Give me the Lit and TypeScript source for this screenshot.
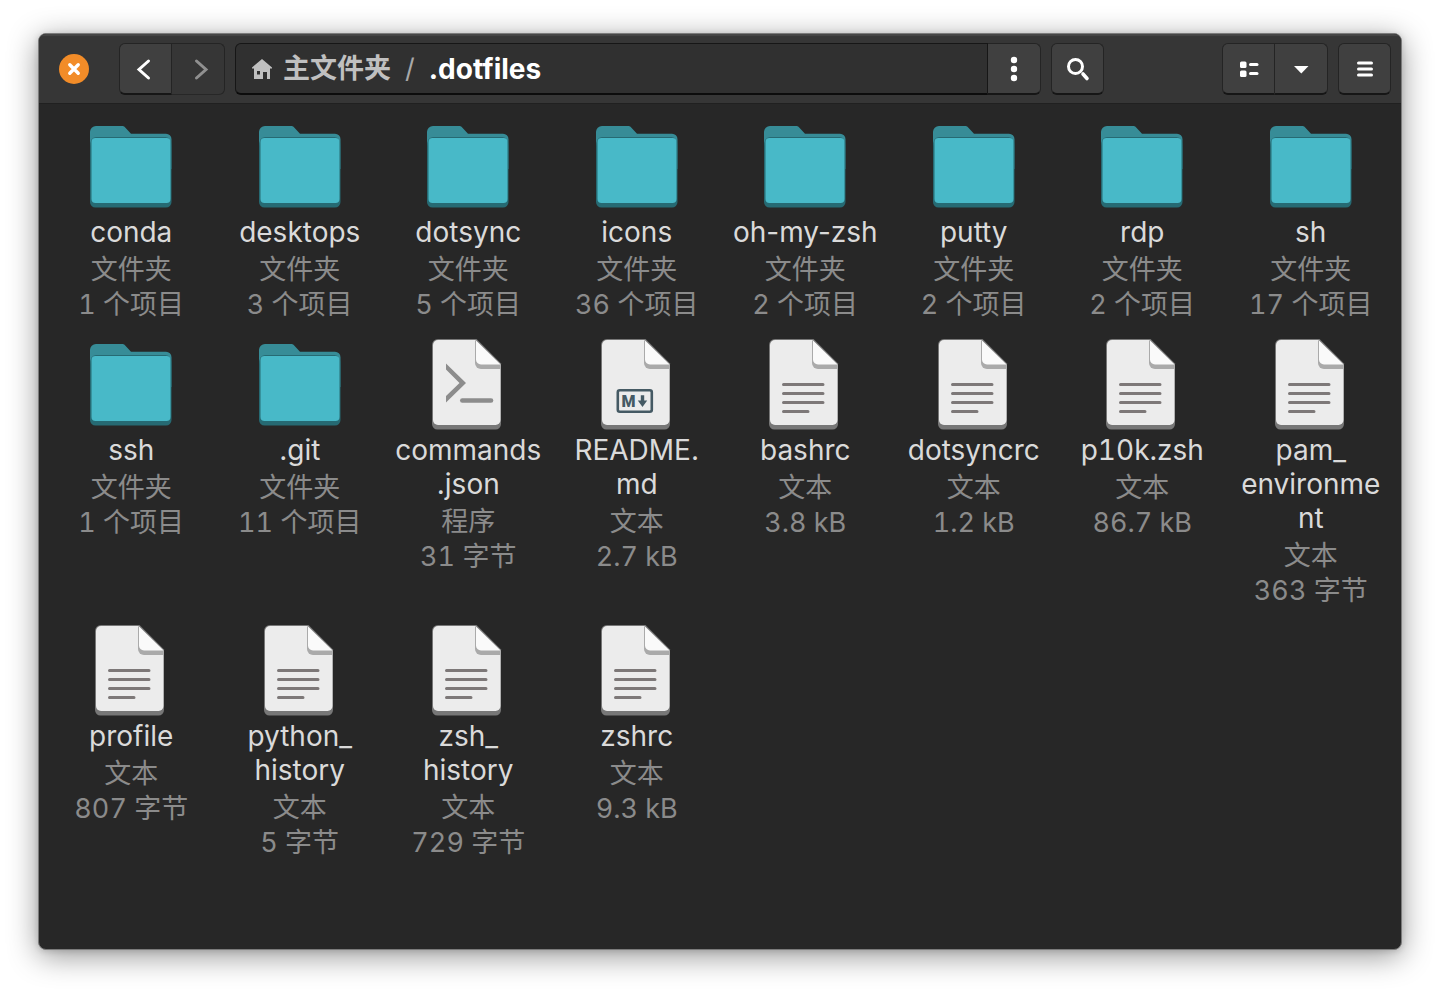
import { LitElement, html, svg, css, nothing } from "lit";
import { customElement, property } from "lit/decorators.js";
import { classMap } from "lit/directives/class-map.js";

type Kind = "folder" | "text" | "script" | "markdown";

interface Entry {
  /** Name split at the places where a line may break. */
  name: string[];
  kind: Kind;
  type: string;
  info: string;
}

const folder = (name: string, count: number): Entry => ({
  name: [name],
  kind: "folder",
  type: "文件夹",
  info: `${count} 个项目`,
});

const file = (name: string[], info: string, kind: Kind = "text", type = "文本"): Entry => ({
  name,
  kind,
  type,
  info,
});

const ENTRIES: Entry[] = [
  folder("conda", 1),
  folder("desktops", 3),
  folder("dotsync", 5),
  folder("icons", 36),
  folder("oh-my-zsh", 2),
  folder("putty", 2),
  folder("rdp", 2),
  folder("sh", 17),
  folder("ssh", 1),
  folder(".git", 11),
  file(["commands", ".json"], "31 字节", "script", "程序"),
  file(["README.", "md"], "2.7 kB", "markdown"),
  file(["bashrc"], "3.8 kB"),
  file(["dotsyncrc"], "1.2 kB"),
  file(["p10k.zsh"], "86.7 kB"),
  file(["pam_", "environment"], "363 字节"),
  file(["profile"], "807 字节"),
  file(["python_", "history"], "5 字节"),
  file(["zsh_", "history"], "729 字节"),
  file(["zshrc"], "9.3 kB"),
];

const folderArt = svg`
  <path d="M7 13a6 6 0 0 1 6-6h26.500q1.200 0 2 .8L48 14.700h35a5.500 5.500 0 0 1 5.500 5.500V50H7z" fill="#378c97"/>
  <path d="M7 28q0-10 6-10h69.500q6 0 6 10v55a5.500 5.500 0 0 1-5.500 5.500H12.500A5.500 5.500 0 0 1 7 83z" fill="#266a73"/>
  <rect x="8.500" y="19" width="79" height="65" rx="4" fill="#48b9c8"/>`;

const sheetArt = svg`
  <path d="M18 2h38.500L81 26.500V87a5.500 5.500 0 0 1-5.500 5.500h-58A5.500 5.500 0 0 1 12 87V8a6 6 0 0 1 6-6z" fill="#777"/>
  <path d="M18 3h37.500L80.500 28v55a5 5 0 0 1-5 5h-57.500a5 5 0 0 1-5-5V8a5 5 0 0 1 5-5z" fill="#ececec"/>
  <path d="M55 3v23a6 6 0 0 0 6 6h19.500v-5z" fill="#aaa"/>
  <path d="M56 3.500v19a5 5 0 0 0 5 5h19.500z" fill="#fafafa"/>`;

const sheetContent: Record<Exclude<Kind, "folder">, unknown> = {
  text: svg`<path d="M26.500 47.500H66M26.500 56.500H66M26.500 65.500H66M26.500 74.500H51" stroke="#7d7878" stroke-width="3" stroke-linecap="round"/>`,
  script: svg`
    <path d="M26 26.500v6L39.500 46 26 59v6.500L46 46z" fill="#8c8c8c"/>
    <path d="M42.300 63.500H71" stroke="#8c8c8c" stroke-width="4.600" stroke-linecap="round"/>`,
  markdown: svg`
    <rect x="28.800" y="53.200" width="34" height="21.500" rx="2" fill="none" stroke="#455a64" stroke-width="2.600"/>
    <text x="32.500" y="70" font-family="Roboto, sans-serif" font-weight="900" font-size="16" fill="#455a64">M</text>
    <path d="M51.800 58.200h3.400v5.300h3L53.500 70l-4.700-6.500h3z" fill="#455a64"/>`,
};

@customElement("file-entry")
export class FileEntry extends LitElement {
  @property({ attribute: false }) entry!: Entry;

  static styles = css`
    :host {
      display: flex;
      flex-direction: column;
      align-items: center;
      padding: 0 11px;
      text-align: center;
    }
    .art {
      display: block;
      width: 96px;
      height: 96px;
    }
    .name {
      max-width: 100%;
      color: #dadada;
      font-size: 28px;
      font-weight: 380;
      line-height: 34px;
      overflow-wrap: anywhere;
    }
    .details {
      margin: 3px 0 0;
      color: #8b8b8b;
      font-size: 27px;
      line-height: 35px;
    }
    .tabular,
    .details {
      font-variant-numeric: tabular-nums;
    }
    .detail {
      display: block;
      white-space: nowrap;
    }
  `;

  render() {
    const { name, kind, type, info } = this.entry;
    const nameClasses = { name: true, tabular: /\d/.test(name.join("")) };
    return html`
      <svg class="art" viewBox="0 0 96 96" fill="none" aria-hidden="true">
        ${kind === "folder" ? folderArt : svg`${sheetArt}${sheetContent[kind]}`}
      </svg>
      <span class=${classMap(nameClasses)}>${name.map((part, i) => html`${i ? html`<wbr />` : nothing}${part}`)}</span>
      <div class="details">
        <span class="detail">${type}</span>
        <span class="detail">${info}</span>
      </div>
    `;
  }
}

@customElement("app-root")
export class AppRoot extends LitElement {
  static styles = css`
    :host {
      display: flex;
      box-sizing: border-box;
      min-height: 100vh;
      padding: 33px 38px 43px;
      background: #fff;
      font-family: Inter, "Noto Sans CJK SC", sans-serif;
    }
    .window {
      flex: 1;
      display: flex;
      flex-direction: column;
      min-width: 0;
      border: 1px solid #7b7b7b;
      border-radius: 8px;
      background: #272727;
      overflow: hidden;
      box-shadow: 0 6px 30px rgba(0, 0, 0, 0.42), 0 1px 6px rgba(0, 0, 0, 0.14);
    }
    .bar {
      display: flex;
      align-items: center;
      gap: 10px;
      padding: 9px 10px 8px;
      background: #363636;
      border-bottom: 1px solid #202020;
      box-shadow: inset 0 2px 1px #464646;
    }
    button {
      display: grid;
      place-items: center;
      box-sizing: border-box;
      margin: 0;
      padding: 0;
      border: 0;
      font: inherit;
      color: #fff;
    }
    .close {
      width: 30px;
      height: 30px;
      margin: 0 20px 0 10px;
      border-radius: 50%;
      background: #f28c28;
    }
    .tool {
      width: 53px;
      height: 52px;
      border: 1px solid #242424;
      border-bottom: 2px solid #161616;
      border-radius: 6px;
      background: #404040;
    }
    .tool:disabled {
      background: #363636;
      border-bottom: 1px solid #272727;
      color: #909090;
    }
    .group {
      display: flex;
    }
    .group .tool:first-child {
      border-radius: 6px 0 0 6px;
    }
    .group .tool:last-child {
      border-left: 0;
      border-radius: 0 6px 6px 0;
    }
    .location {
      flex: 1;
      display: flex;
      max-width: 806px;
    }
    .location .tool {
      border-left: 0;
      border-radius: 0 6px 6px 0;
    }
    .path {
      flex: 1;
      display: flex;
      align-items: center;
      box-sizing: border-box;
      height: 52px;
      padding: 0 14px;
      border: 1px solid #161616;
      border-bottom: 2px solid #0c0c0c;
      border-radius: 6px 0 0 6px;
      background: #303030;
      font-size: 27px;
      line-height: 36px;
      white-space: nowrap;
    }
    .crumb {
      display: flex;
      align-items: center;
      gap: 9px;
      color: #c0c0c0;
      font-weight: 600;
      text-decoration: none;
    }
    .slash {
      margin: 0 14px;
      color: #a8a8a8;
    }
    .current {
      color: #fff;
      font-size: 28px;
      font-weight: 700;
    }
    .view {
      margin-left: auto;
    }
    .icon {
      display: block;
      width: 32px;
      height: 32px;
    }
    .close .icon {
      width: 30px;
      height: 30px;
    }
    .home {
      display: block;
      width: 24px;
      height: 24px;
    }
    .files {
      display: grid;
      grid-template-columns: repeat(8, minmax(0, 1fr));
      row-gap: 15px;
      margin: 0;
      padding: 15px 6px 40px 8px;
      list-style: none;
    }
  `;

  private icon(content: unknown) {
    return html`<svg class="icon" viewBox="0 0 32 32" fill="none" aria-hidden="true">${content}</svg>`;
  }

  render() {
    return html`
      <main class="window">
        <header class="bar">
          <button class="close" aria-label="关闭">
            ${this.icon(svg`<path d="M11.500 11.500l9 9M20.500 11.500l-9 9" stroke="#fff" stroke-width="3.600" stroke-linecap="round"/>`)}
          </button>
          <div class="group">
            <button class="tool" aria-label="后退">
              ${this.icon(svg`<path d="M18.500 8L9 16.500l9.500 8.500" stroke="currentColor" stroke-width="3" stroke-linecap="round"/>`)}
            </button>
            <button class="tool" aria-label="前进" disabled>
              ${this.icon(svg`<path d="M14.500 8l9.500 8.500-9.500 8.500" stroke="currentColor" stroke-width="3" stroke-linecap="round"/>`)}
            </button>
          </div>
          <div class="location">
            <nav class="path" aria-label="路径">
              <a class="crumb" href="#home">
                <svg class="home" viewBox="0 0 24 24" aria-hidden="true">
                  <path fill="currentColor" fill-rule="evenodd" d="M12 2l10 8.500v1h-2V22h-3v-7h-4v7H4V11.500H2v-1zM7 14v3.500h3V14z"/>
                </svg>
                主文件夹
              </a>
              <span class="slash">/</span>
              <a class="crumb current" href="#dotfiles" aria-current="page">.dotfiles</a>
            </nav>
            <button class="tool" aria-label="文件夹选项">
              ${this.icon(svg`<g fill="currentColor"><circle cx="16" cy="7" r="3.200"/><circle cx="16" cy="16" r="3.200"/><circle cx="16" cy="25" r="3.200"/></g>`)}
            </button>
          </div>
          <button class="tool" aria-label="搜索">
            ${this.icon(svg`<circle cx="13.500" cy="13.500" r="7" stroke="currentColor" stroke-width="3"/><path d="M21 21l4 4.500" stroke="currentColor" stroke-width="3.600" stroke-linecap="round"/>`)}
          </button>
          <div class="group view">
            <button class="tool" aria-label="列表视图">
              ${this.icon(svg`<g fill="currentColor"><rect x="7" y="8.500" width="6.500" height="6.500" rx="1.500"/><rect x="7" y="17.500" width="6.500" height="6.500" rx="1.500"/><rect x="16" y="10" width="9.500" height="3" rx="1.500"/><rect x="16" y="19" width="9.500" height="3" rx="1.500"/></g>`)}
            </button>
            <button class="tool" aria-label="视图选项">
              ${this.icon(svg`<path d="M9 13h14.500l-7.200 7.500z" fill="currentColor"/>`)}
            </button>
          </div>
          <button class="tool" aria-label="菜单">
            ${this.icon(svg`<path d="M9.500 10h13M9.500 16h13M9.500 22h13" stroke="currentColor" stroke-width="3" stroke-linecap="round"/>`)}
          </button>
        </header>
        <ul class="files">
          ${ENTRIES.map((entry) => html`<li><file-entry .entry=${entry}></file-entry></li>`)}
        </ul>
      </main>
    `;
  }
}
